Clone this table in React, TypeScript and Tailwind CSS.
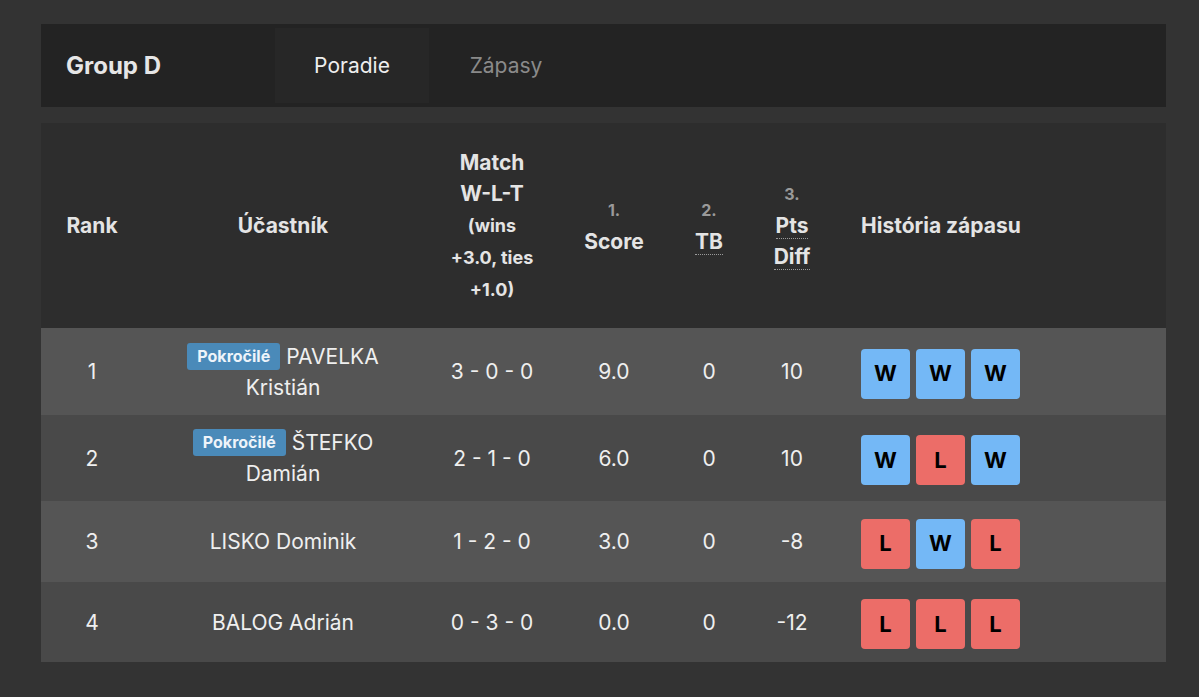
import React from "react";

type Result = "W" | "L";

type Row = {
  rank: number;
  badge?: string;
  name: string;
  wlt: string;
  score: string;
  tb: string;
  diff: string;
  history: Result[];
  h: string;
};

const rows: Row[] = [
  { rank: 1, badge: "Pokročilé", name: "PAVELKA Kristián", wlt: "3 - 0 - 0", score: "9.0", tb: "0", diff: "10", history: ["W", "W", "W"], h: "h-[87px]" },
  { rank: 2, badge: "Pokročilé", name: "ŠTEFKO Damián", wlt: "2 - 1 - 0", score: "6.0", tb: "0", diff: "10", history: ["W", "L", "W"], h: "h-[86px]" },
  { rank: 3, name: "LISKO Dominik", wlt: "1 - 2 - 0", score: "3.0", tb: "0", diff: "-8", history: ["L", "W", "L"], h: "h-[81px]" },
  { rank: 4, name: "BALOG Adrián", wlt: "0 - 3 - 0", score: "0.0", tb: "0", diff: "-12", history: ["L", "L", "L"], h: "h-[80px]" },
];

const ResultBox = ({ r }: { r: Result }) => (
  <div
    className={
      "flex h-[50px] w-[49px] items-center justify-center rounded-[4px] text-[22px] font-bold text-black " +
      (r === "W" ? "bg-[#74b8f6]" : "bg-[#ec6d68]")
    }
  >
    {r}
  </div>
);

export default function App() {
  return (
    <div className="min-h-[697px] w-full bg-[#333333] pl-[41px] pr-[33px] pt-[24px] font-['Inter',sans-serif] text-[#ececec]">
      {/* header */}
      <div className="flex h-[83px] items-center bg-[#232323] py-[4px]">
        <div className="w-[234px] pl-[25px] text-[24px] font-bold text-[#e6e6e6]">Group D</div>
        <div className="flex h-full w-[154px] items-center justify-center bg-[#272727] text-[21px] text-[#eeeeee]">
          Poradie
        </div>
        <div className="flex h-full w-[154px] items-center justify-center text-[21px] text-[#8a8a8a]">
          Zápasy
        </div>
      </div>

      {/* standings */}
      <table className="mt-[16px] w-full table-fixed border-collapse">
        <thead>
          <tr className="h-[205px] bg-[#2d2d2d] text-[21px] leading-[31px] text-[#e4e4e4]">
            <th className="w-[102px] text-center font-bold">Rank</th>
            <th className="w-[280px] text-center font-bold">Účastník</th>
            <th className="w-[138px] text-center font-bold">
              Match
              <br />
              W-L-T
              <br />
              <span className="text-[18px]">
                (wins
                <br />
                +3.0, ties
                <br />
                +1.0)
              </span>
            </th>
            <th className="w-[106px] text-center font-bold">
              <div className="text-[16px] text-[#9a9a9a]">1.</div>
              <div>Score</div>
            </th>
            <th className="w-[84px] text-center font-bold">
              <div className="text-[16px] text-[#9a9a9a]">2.</div>
              <div>
                <span className="border-b border-dotted border-[#9a9a9a] leading-[26px]">TB</span>
              </div>
            </th>
            <th className="w-[82px] text-center font-bold">
              <div className="text-[16px] text-[#9a9a9a]">3.</div>
              <div>
                <span className="border-b border-dotted border-[#9a9a9a] leading-[26px]">Pts</span>
              </div>
              <div>
                <span className="border-b border-dotted border-[#9a9a9a] leading-[26px]">Diff</span>
              </div>
            </th>
            <th className="pl-[28px] text-left font-bold">História zápasu</th>
          </tr>
        </thead>
        <tbody className="text-[21px] leading-[31px] text-[#efefef]">
          {rows.map((row, i) => (
            <tr key={row.rank} className={row.h + " " + (i % 2 === 0 ? "bg-[#555555]" : "bg-[#494949]")}>
              <td className="text-center">{row.rank}</td>
              <td className="px-[20px] text-center">
                {row.badge && (
                  <span className="mr-[6px] inline-block rounded-[3px] bg-[#4a8ab9] px-[10px] align-[2px] text-[16px] font-bold leading-[27px] text-[#eef4fa]">
                    {row.badge}
                  </span>
                )}
                {row.name}
              </td>
              <td className="text-center">{row.wlt}</td>
              <td className="text-center">{row.score}</td>
              <td className="text-center">{row.tb}</td>
              <td className="text-center">{row.diff}</td>
              <td className="pl-[28px] pt-[4px]">
                <div className="flex gap-[6px]">
                  {row.history.map((r, j) => (
                    <ResultBox key={j} r={r} />
                  ))}
                </div>
              </td>
            </tr>
          ))}
        </tbody>
      </table>
    </div>
  );
}
